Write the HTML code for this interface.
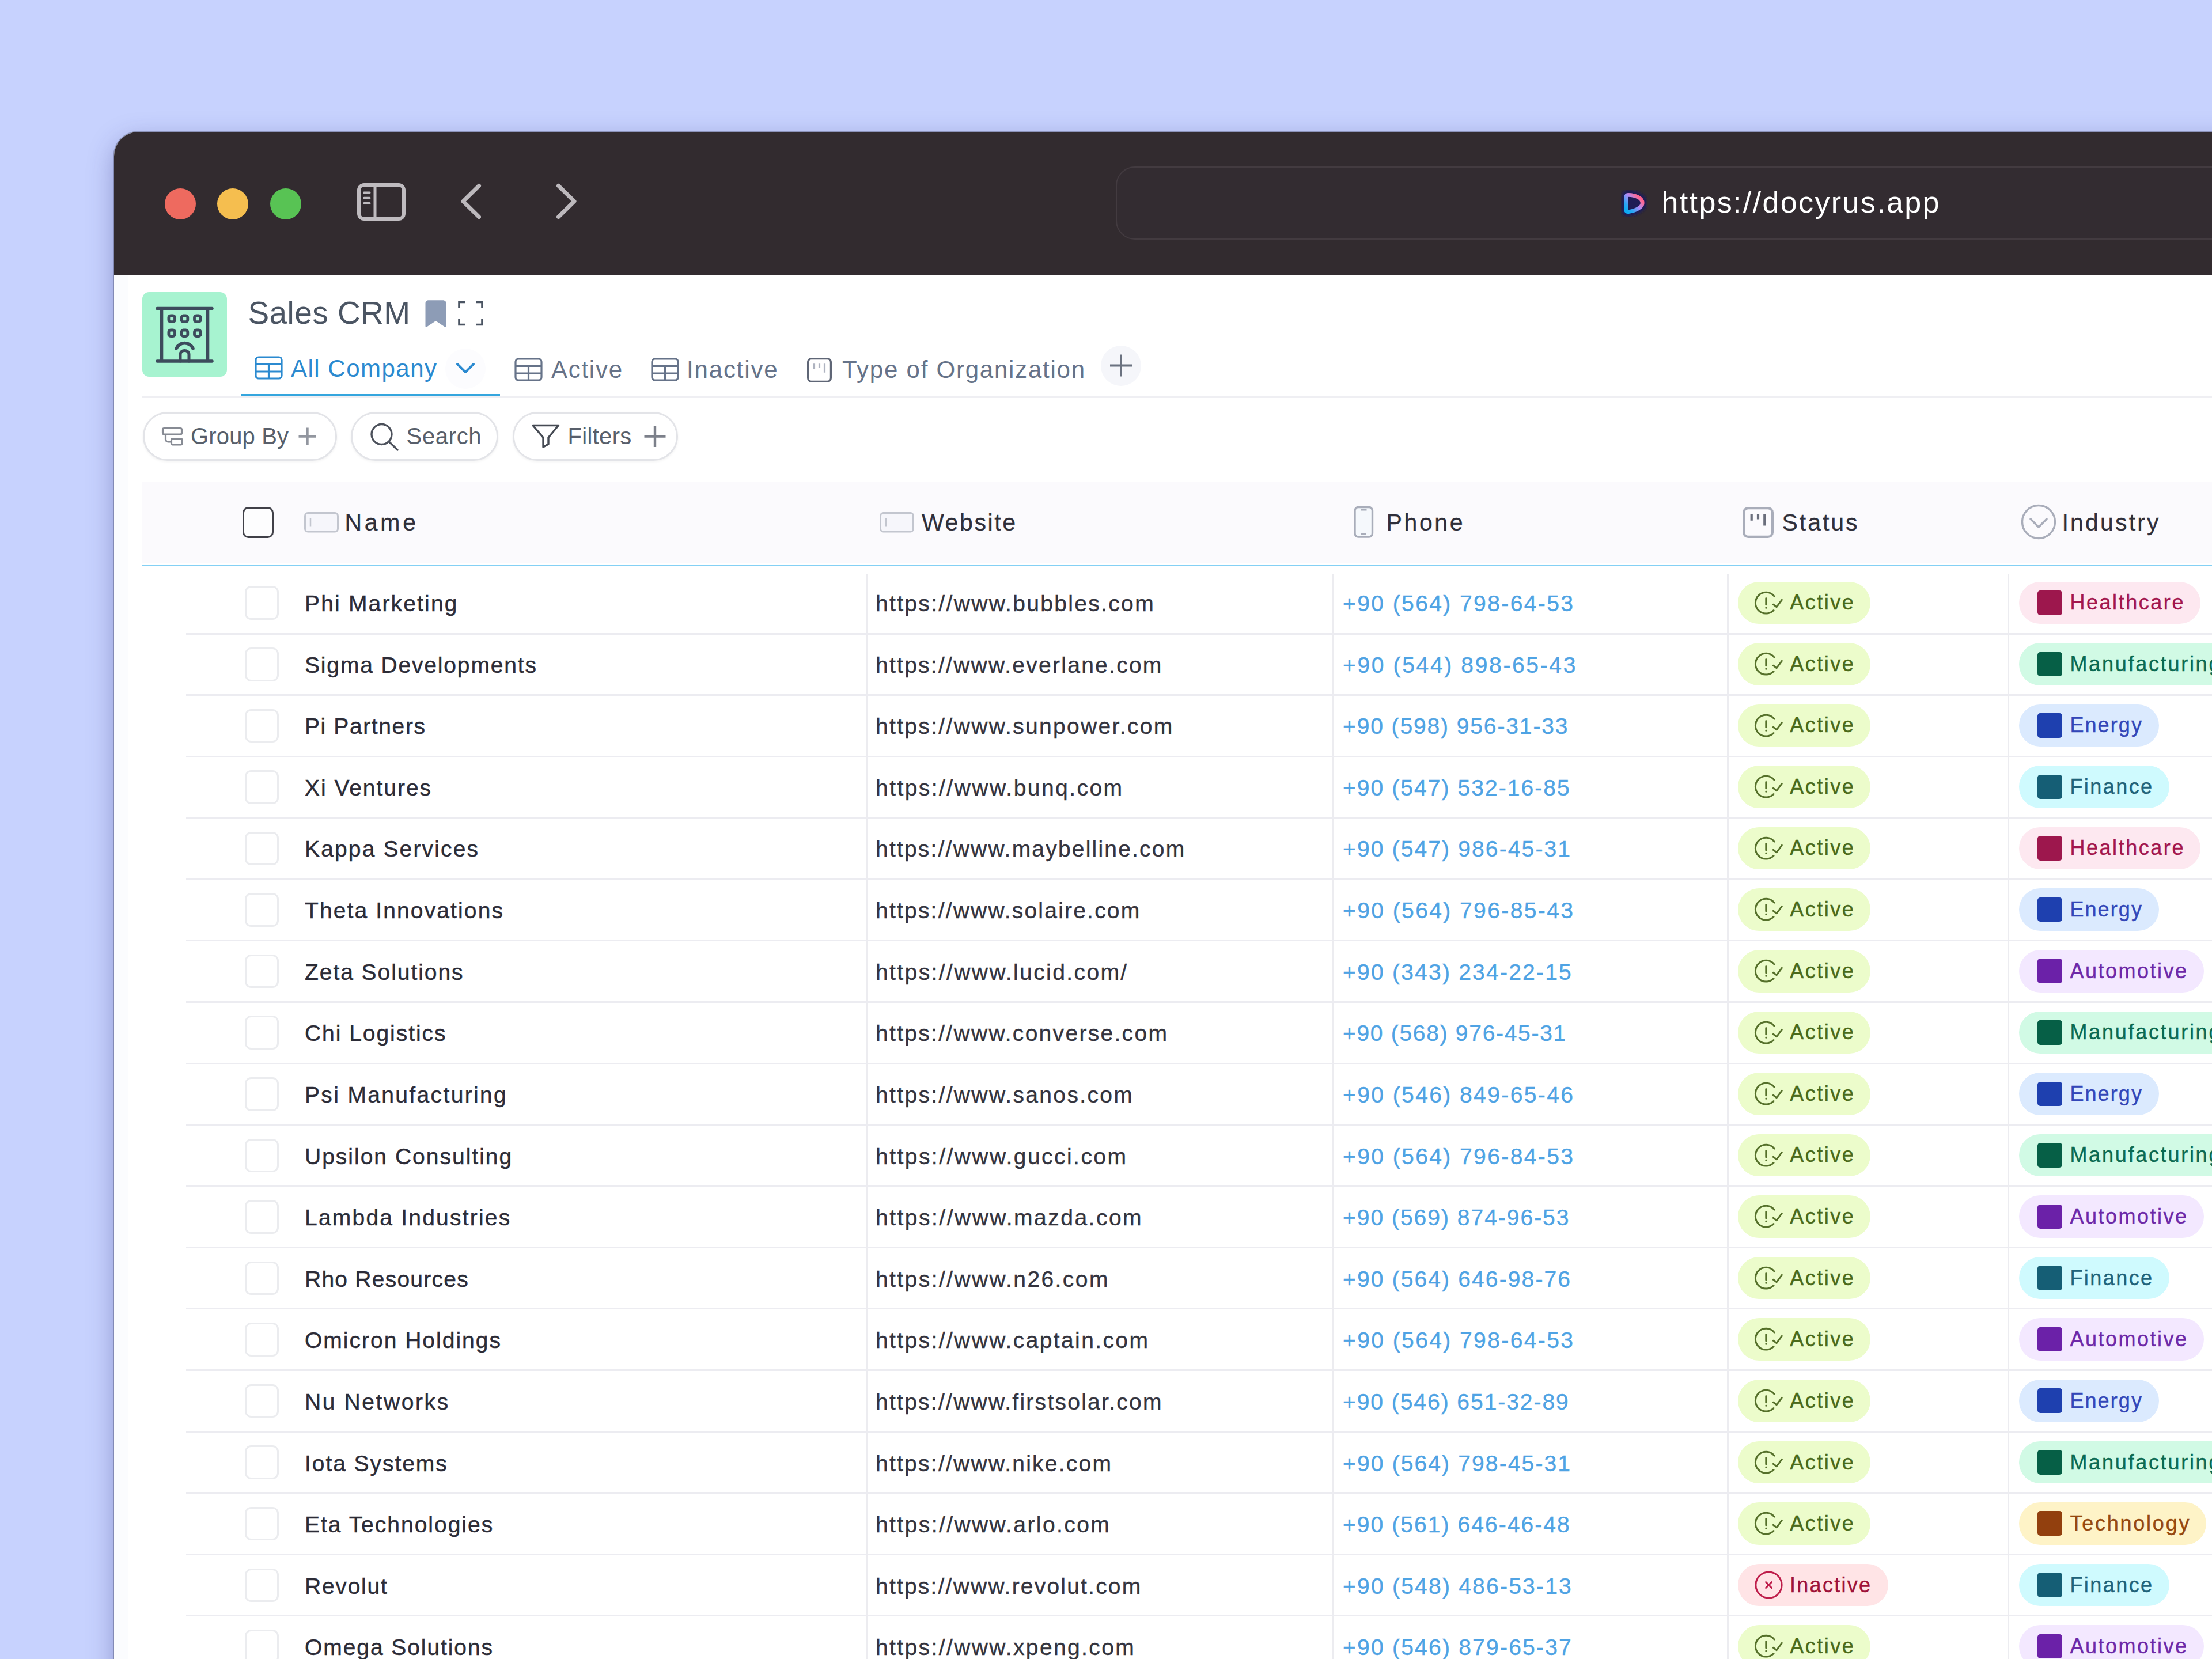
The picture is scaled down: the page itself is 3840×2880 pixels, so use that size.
<!DOCTYPE html>
<html lang="en"><head><meta charset="utf-8"><title>Sales CRM</title>
<style>
html,body{margin:0;padding:0}
body{width:3840px;height:2880px;overflow:hidden;position:relative;background:#c7d2fe;font-family:"Liberation Sans",sans-serif}
.b{position:absolute;box-sizing:border-box;display:block}
.t{position:absolute;white-space:nowrap;display:block}
</style></head><body>
<div class="b" style="left:198px;top:229px;width:3700px;height:2700px;border-radius:42px 0 0 0;background:#fff;box-shadow:0 14px 45px rgba(50,50,130,.36),0 0 0 1.5px rgba(110,115,140,.55);overflow:hidden"><div style="height:248px;background:#322b2f"></div><div style="width:24px;height:2500px;background:#fbfcfe;border-right:1px solid #f7f8fa"></div></div>
<header>
<div class="b" style="left:286.0px;top:326.8px;width:54.0px;height:54.0px;border-radius:50%;background:#ee6a5f"></div>
<div class="b" style="left:377.0px;top:326.8px;width:54.0px;height:54.0px;border-radius:50%;background:#f5be4f"></div>
<div class="b" style="left:468.5px;top:326.8px;width:54.0px;height:54.0px;border-radius:50%;background:#58c354"></div>
<svg class="b" style="left:617.0px;top:315.0px;" width="90.0" height="71.0" viewBox="617 315 90 71" fill="none"><rect x="623" y="321" width="78" height="59" rx="9" stroke="#bfbbbf" stroke-width="6"/><path d="M651 321V380" stroke="#bfbbbf" stroke-width="5"/><path d="M632 334.5H641.5M632 343.7H641.5M632 353H641.5" stroke="#bfbbbf" stroke-width="4" stroke-linecap="round"/></svg>
<svg class="b" style="left:790.0px;top:310.0px;" width="60.0" height="80.0" viewBox="790 310 60 80" fill="none"><path d="M831.5 322.5L804 349.5L831.5 376.5" stroke="#bcb8bc" stroke-width="7" stroke-linecap="round" stroke-linejoin="round"/></svg>
<svg class="b" style="left:950.0px;top:310.0px;" width="60.0" height="80.0" viewBox="950 310 60 80" fill="none"><path d="M969.5 322.5L997 349.5L969.5 376.5" stroke="#bcb8bc" stroke-width="7" stroke-linecap="round" stroke-linejoin="round"/></svg>
<div class="b" style="left:1936.5px;top:288.6px;width:2000.0px;height:127.4px;border-radius:33px;border:2px solid #433b40;background:#332c31"></div>
<svg class="b" style="left:2796.0px;top:312.0px;" width="80.0" height="80.0" viewBox="2796 312 80 80" fill="none"><defs><linearGradient id="lg" x1="2823" y1="366" x2="2850" y2="341" gradientUnits="userSpaceOnUse"><stop offset="0" stop-color="#0cabf3"/><stop offset=".2" stop-color="#2aa6f4"/><stop offset=".55" stop-color="#ab8cf8"/><stop offset=".85" stop-color="#fb6a97"/><stop offset="1" stop-color="#ff5a80"/></linearGradient><filter id="bl" x="-30%" y="-30%" width="160%" height="160%"><feGaussianBlur stdDeviation="2.2"/></filter></defs><path d="M2822.9 342C2822.9 339.5 2824.2 338.2 2826.5 338.3C2839.5 338.6 2851.3 344 2851.2 352.5C2851.2 359.8 2839.5 366 2827 367.6C2824.5 368 2822.9 366.8 2822.9 364.5Z" fill="#1e1a58" stroke="#1e1a58" stroke-width="16" stroke-linejoin="round" filter="url(#bl)"/><path d="M2822.9 342C2822.9 339.5 2824.2 338.2 2826.5 338.3C2839.5 338.6 2851.3 344 2851.2 352.5C2851.2 359.8 2839.5 366 2827 367.6C2824.5 368 2822.9 366.8 2822.9 364.5Z" fill="#1f1c55" stroke="url(#lg)" stroke-width="6.8" stroke-linejoin="round"/></svg>
<span class="t" style="left:2884.5px;top:325.0px;font-size:52px;line-height:52px;color:#ffffff;letter-spacing:2.37px;font-weight:400;">https://docyrus.app</span>
</header>
<section>
<div class="b" style="left:247.0px;top:507.0px;width:147.0px;height:147.0px;border-radius:12px;background:#a7f3d0"></div>
<svg class="b" style="left:265.0px;top:525.0px;" width="112.0" height="112.0" viewBox="265 525 112 112" fill="none"><g stroke="#3d4b5c" stroke-width="5.6" stroke-linecap="round" stroke-linejoin="round"><path d="M273 535.5H368M273 627H368M280.5 535.5V627M360.5 535.5V627"/><rect x="292.9" y="548" width="10.6" height="10.6" rx="3.2" stroke-width="4.8"/><rect x="315.2" y="548" width="10.6" height="10.6" rx="3.2" stroke-width="4.8"/><rect x="337.5" y="548" width="10.6" height="10.6" rx="3.2" stroke-width="4.8"/><rect x="292.9" y="573" width="10.6" height="10.6" rx="3.2" stroke-width="4.8"/><rect x="315.2" y="573" width="10.6" height="10.6" rx="3.2" stroke-width="4.8"/><rect x="337.5" y="573" width="10.6" height="10.6" rx="3.2" stroke-width="4.8"/><path d="M306 605C312 592.5 329 592.5 335 605"/><path d="M313 627V615.5C313 606 328 606 328 615.5V627" stroke-width="5"/></g></svg>
<span class="t" style="left:430.5px;top:515.9px;font-size:55px;line-height:55px;color:#4b5563;letter-spacing:0.42px;font-weight:400;">Sales CRM</span>
<svg class="b" style="left:735.0px;top:519.0px;" width="44.0" height="52.0" viewBox="735 519 44 52" fill="none"><path d="M738.5 527C738.5 523.5 740.5 521.3 744 521.3H769C772.5 521.3 774.5 523.5 774.5 527V566C774.5 567.6 773 568.2 771.8 567.3L756.5 557L741.2 567.3C740 568.2 738.5 567.6 738.5 566Z" fill="#8d9cb6"/></svg>
<svg class="b" style="left:792.0px;top:519.0px;" width="50.0" height="50.0" viewBox="792 519 50 50" fill="none"><path d="M797 535V524.5H808M826 524.5H837V535M837 553V563.5H826M808 563.5H797V553" stroke="#4b5563" stroke-width="3.6"/></svg>
<svg class="b" style="left:441.0px;top:617.0px;" width="51.0" height="43.0" viewBox="441 617 51 43" fill="none"><g stroke="#2b8ad0" stroke-width="3.2"><rect x="444" y="620" width="45" height="37" rx="5"/><path d="M444 632.5H489M444 645H489M466.5 632.5V657"/></g></svg>
<span class="t" style="left:505.0px;top:619.4px;font-size:42px;line-height:42px;color:#2b8ad0;letter-spacing:1.49px;font-weight:400;">All Company</span>
<div class="b" style="left:773.0px;top:605.0px;width:70.0px;height:70.0px;border-radius:50%;background:#fcfcfe"></div>
<svg class="b" style="left:785.0px;top:622.0px;" width="46.0" height="36.0" viewBox="785 622 46 36" fill="none"><path d="M794 632L808 646L822 632" stroke="#2b8ad0" stroke-width="4" stroke-linecap="round" stroke-linejoin="round"/></svg>
<div class="b" style="left:247.0px;top:688.0px;width:3600.0px;height:3.0px;background:#efeff3"></div>
<div class="b" style="left:418.0px;top:683.6px;width:450.0px;height:3.1px;background:#35a6de"></div>
<svg class="b" style="left:892.0px;top:620.0px;" width="51.0" height="43.0" viewBox="892 620 51 43" fill="none"><g stroke="#667389" stroke-width="3.2"><rect x="895" y="623" width="45" height="37" rx="5"/><path d="M895 635.5H940M895 648H940M917.5 635.5V660"/></g></svg>
<span class="t" style="left:957.0px;top:621.4px;font-size:42px;line-height:42px;color:#667389;letter-spacing:1.73px;font-weight:400;">Active</span>
<svg class="b" style="left:1129.0px;top:620.0px;" width="51.0" height="43.0" viewBox="1129 620 51 43" fill="none"><g stroke="#667389" stroke-width="3.2"><rect x="1132" y="623" width="45" height="37" rx="5"/><path d="M1132 635.5H1177M1132 648H1177M1154.5 635.5V660"/></g></svg>
<span class="t" style="left:1192.0px;top:621.4px;font-size:42px;line-height:42px;color:#667389;letter-spacing:1.84px;font-weight:400;">Inactive</span>
<svg class="b" style="left:1400.0px;top:620.0px;" width="45.0" height="45.0" viewBox="1400 620 45 45" fill="none"><rect x="1402.6" y="622.6" width="39.8" height="39.8" rx="6.0" stroke="#5f6676" stroke-width="3.2"/><path d="M1413.5 631.3V639.9M1422.5 631.3V638.2M1431.5 631.3V646.8" stroke="#aeb3c0" stroke-width="3.2"/></svg>
<span class="t" style="left:1462.0px;top:621.4px;font-size:42px;line-height:42px;color:#667389;letter-spacing:1.76px;font-weight:400;">Type of Organization</span>
<div class="b" style="left:1911.0px;top:599.5px;width:70.0px;height:70.0px;border-radius:50%;background:#f5f6fa"></div>
<svg class="b" style="left:1920.0px;top:610.0px;" width="52.0" height="52.0" viewBox="1920 610 52 52" fill="none"><path d="M1927 634.5H1965M1946 615.5V653.5" stroke="#6b7280" stroke-width="4"/></svg>
</section>
<nav>
<div class="b" style="left:247.5px;top:715.0px;width:337.5px;height:85.0px;border-radius:43px;border:3px solid #e3e4e8;background:#fff;box-shadow:0 2px 4px rgba(0,0,0,.05)"></div>
<div class="b" style="left:609.0px;top:715.0px;width:256.0px;height:85.0px;border-radius:43px;border:3px solid #e3e4e8;background:#fff;box-shadow:0 2px 4px rgba(0,0,0,.05)"></div>
<div class="b" style="left:889.5px;top:715.0px;width:287.0px;height:85.0px;border-radius:43px;border:3px solid #e3e4e8;background:#fff;box-shadow:0 2px 4px rgba(0,0,0,.05)"></div>
<svg class="b" style="left:276.0px;top:736.0px;" width="46.0" height="42.0" viewBox="276 736 46 42" fill="none"><g stroke="#878b94" stroke-width="3.2" stroke-linejoin="round"><rect x="282.5" y="743.5" width="33" height="10.5" rx="2.5"/><rect x="297.5" y="761.5" width="18.5" height="10.5" rx="2.5"/><path d="M287.5 754V762.5C287.5 765 289.5 767 292 767H297.5"/></g></svg>
<span class="t" style="left:331.0px;top:736.9px;font-size:40px;line-height:40px;color:#585f6b;letter-spacing:0.15px;font-weight:400;">Group By</span>
<svg class="b" style="left:515.0px;top:741.0px;" width="36.0" height="36.0" viewBox="515 741 36 36" fill="none"><path d="M518.5 757.5H548.5M533.5 742.5V772.5" stroke="#92969f" stroke-width="4.4"/></svg>
<svg class="b" style="left:638.0px;top:730.0px;" width="58.0" height="56.0" viewBox="638 730 58 56" fill="none"><circle cx="662.5" cy="754" r="17.5" stroke="#4c515b" stroke-width="3.4"/><path d="M675.5 767L690 781" stroke="#4c515b" stroke-width="3.4" stroke-linecap="round"/></svg>
<span class="t" style="left:705.6px;top:736.9px;font-size:40px;line-height:40px;color:#585f6b;letter-spacing:0.65px;font-weight:400;">Search</span>
<svg class="b" style="left:918.0px;top:732.0px;" width="58.0" height="50.0" viewBox="918 732 58 50" fill="none"><path d="M925 738.5H969.5L952 759.5V771L943 776V759.5Z" stroke="#454a53" stroke-width="3.4" stroke-linejoin="round"/></svg>
<span class="t" style="left:985.6px;top:736.9px;font-size:40px;line-height:40px;color:#585f6b;letter-spacing:0.30px;font-weight:400;">Filters</span>
<svg class="b" style="left:1114.0px;top:734.0px;" width="46.0" height="46.0" viewBox="1114 734 46 46" fill="none"><path d="M1118.5 757.5H1155.5M1137 739V776" stroke="#7c808a" stroke-width="4.4"/></svg>
</nav>
<main role="table">
<div role="row">
<div class="b" style="left:247.0px;top:836.0px;width:3600.0px;height:142.0px;background:#fbfafd"></div>
<div class="b" style="left:247.0px;top:979.8px;width:3600.0px;height:3.0px;background:#84d0f5"></div>
<div class="b" style="left:421.0px;top:879.5px;width:54.0px;height:54.0px;border-radius:10px;border:3.7px solid #404048;background:#fdfdfe"></div>
<svg class="b" style="left:527.0px;top:887.6px;" width="62.0" height="38.0" viewBox="527 887.6 62 38" fill="none"><rect x="529.5" y="890.1" width="57" height="32.5" rx="5" stroke="#c3c6cf" stroke-width="3" fill="#f6f6fb"/><path d="M539 899.6V913.1" stroke="#c3c6cf" stroke-width="2.5"/></svg>
<span class="t" style="left:598.5px;top:887.3px;font-size:41px;line-height:41px;color:#2f2f3a;letter-spacing:4.71px;font-weight:400;-webkit-text-stroke:.3px #2f2f3a;">Name</span>
<svg class="b" style="left:1526.0px;top:887.6px;" width="62.0" height="38.0" viewBox="1526 887.6 62 38" fill="none"><rect x="1528.5" y="890.1" width="57" height="32.5" rx="5" stroke="#c3c6cf" stroke-width="3" fill="#f6f6fb"/><path d="M1538 899.6V913.1" stroke="#c3c6cf" stroke-width="2.5"/></svg>
<span class="t" style="left:1600.0px;top:887.3px;font-size:41px;line-height:41px;color:#2f2f3a;letter-spacing:2.61px;font-weight:400;-webkit-text-stroke:.3px #2f2f3a;">Website</span>
<svg class="b" style="left:2348.0px;top:876.0px;" width="40.0" height="60.0" viewBox="2348 876 40 60" fill="none"><rect x="2352" y="880.5" width="30.5" height="51.5" rx="6" stroke="#a9adba" stroke-width="3.4" fill="#f5f8fc"/><path d="M2362 885H2372.5M2362.5 926.5H2372" stroke="#a9adba" stroke-width="3"/></svg>
<span class="t" style="left:2406.5px;top:887.3px;font-size:41px;line-height:41px;color:#2f2f3a;letter-spacing:3.62px;font-weight:400;-webkit-text-stroke:.3px #2f2f3a;">Phone</span>
<svg class="b" style="left:3024.0px;top:878.5px;" width="56.0" height="56.0" viewBox="3024 878.5 56 56" fill="none"><rect x="3027.1" y="881.6" width="49.8" height="49.8" rx="7.6" stroke="#a9adba" stroke-width="4.2"/><path d="M3040.7 892.5V903.3M3052.0 892.5V901.1M3063.3 892.5V911.9" stroke="#6a6e7c" stroke-width="4.2"/></svg>
<span class="t" style="left:3093.5px;top:887.3px;font-size:41px;line-height:41px;color:#2f2f3a;letter-spacing:2.96px;font-weight:400;-webkit-text-stroke:.3px #2f2f3a;">Status</span>
<svg class="b" style="left:3506.0px;top:873.0px;" width="66.0" height="66.0" viewBox="3506 873 66 66" fill="none"><circle cx="3539" cy="906" r="28.5" stroke="#a9adba" stroke-width="3.4"/><path d="M3525 901L3539 915L3553 901" stroke="#a9adba" stroke-width="3.6" stroke-linecap="round" stroke-linejoin="round"/></svg>
<span class="t" style="left:3579.5px;top:887.3px;font-size:41px;line-height:41px;color:#2f2f3a;letter-spacing:3.17px;font-weight:400;-webkit-text-stroke:.3px #2f2f3a;">Industry</span>
</div>
<div class="b" style="left:1502.5px;top:995.5px;width:3.0px;height:1900.0px;background:#ececf0"></div>
<div class="b" style="left:2312.5px;top:995.5px;width:3.0px;height:1900.0px;background:#ececf0"></div>
<div class="b" style="left:2997.5px;top:995.5px;width:3.0px;height:1900.0px;background:#ececf0"></div>
<div class="b" style="left:3485.0px;top:995.5px;width:3.0px;height:1900.0px;background:#ececf0"></div>
<div role="row">
<div class="b" style="left:322.5px;top:1098.9px;width:3600.0px;height:2.8px;background:#ececf1"></div>
<div class="b" style="left:425.0px;top:1017.4px;width:58.5px;height:58.5px;border-radius:11px;border:3.8px solid #ebecef;background:#fff"></div>
<span class="t" style="left:529.0px;top:1028.0px;font-size:39px;line-height:39px;color:#2c2c37;letter-spacing:2.17px;font-weight:400;-webkit-text-stroke:.45px #2c2c37;">Phi Marketing</span>
<span class="t" style="left:1520.0px;top:1028.0px;font-size:39px;line-height:39px;color:#34343e;letter-spacing:2.33px;font-weight:400;-webkit-text-stroke:.4px #34343e;">https://www.bubbles.com</span>
<span class="t" style="left:2331.0px;top:1028.0px;font-size:39px;line-height:39px;color:#4fa3e4;letter-spacing:2.41px;font-weight:400;-webkit-text-stroke:.4px #4fa3e4;">+90 (564) 798-64-53</span>
<div class="b" style="left:3016.7px;top:1009.6px;width:230.0px;height:73.5px;border-radius:37px;background:#ecfccb"></div>
<svg class="b" style="left:3040.0px;top:1016.6px;" width="60.0" height="60.0" viewBox="3040 1016.6 60 60" fill="none"><g stroke="#55702a" stroke-width="3" stroke-linecap="round" stroke-linejoin="round"><path d="M3080.1 1034.7A18.4 18.4 0 1 0 3079.0 1059.1"/><path d="M3078.3 1048.9L3084.2 1053.3L3093.3 1040.9"/><path d="M3065.8 1038.1V1049.3M3065.8 1054.7V1054.9"/></g></svg>
<span class="t" style="left:3107.3px;top:1027.9px;font-size:36px;line-height:36px;color:#4a6a1a;letter-spacing:2.49px;font-weight:400;-webkit-text-stroke:.4px #4a6a1a;">Active</span>
<div class="b" style="left:3504.5px;top:1009.6px;width:315.9px;height:73.5px;border-radius:37px;background:#fde8f0"></div>
<div class="b" style="left:3537.0px;top:1024.9px;width:42.6px;height:42.8px;border-radius:5px;background:#9d174d"></div>
<span class="t" style="left:3593.4px;top:1027.9px;font-size:36px;line-height:36px;color:#a3154d;letter-spacing:2.55px;font-weight:400;-webkit-text-stroke:.4px #a3154d;">Healthcare</span>
</div>
<div role="row">
<div class="b" style="left:322.5px;top:1205.4px;width:3600.0px;height:2.8px;background:#ececf1"></div>
<div class="b" style="left:425.0px;top:1124.0px;width:58.5px;height:58.5px;border-radius:11px;border:3.8px solid #ebecef;background:#fff"></div>
<span class="t" style="left:529.0px;top:1134.6px;font-size:39px;line-height:39px;color:#2c2c37;letter-spacing:1.84px;font-weight:400;-webkit-text-stroke:.45px #2c2c37;">Sigma Developments</span>
<span class="t" style="left:1520.0px;top:1134.6px;font-size:39px;line-height:39px;color:#34343e;letter-spacing:2.26px;font-weight:400;-webkit-text-stroke:.4px #34343e;">https://www.everlane.com</span>
<span class="t" style="left:2331.0px;top:1134.6px;font-size:39px;line-height:39px;color:#4fa3e4;letter-spacing:2.65px;font-weight:400;-webkit-text-stroke:.4px #4fa3e4;">+90 (544) 898-65-43</span>
<div class="b" style="left:3016.7px;top:1116.2px;width:230.0px;height:73.5px;border-radius:37px;background:#ecfccb"></div>
<svg class="b" style="left:3040.0px;top:1123.2px;" width="60.0" height="60.0" viewBox="3040 1123.2 60 60" fill="none"><g stroke="#55702a" stroke-width="3" stroke-linecap="round" stroke-linejoin="round"><path d="M3080.1 1141.3A18.4 18.4 0 1 0 3079.0 1165.7"/><path d="M3078.3 1155.5L3084.2 1159.9L3093.3 1147.5"/><path d="M3065.8 1144.7V1155.9M3065.8 1161.3V1161.5"/></g></svg>
<span class="t" style="left:3107.3px;top:1134.5px;font-size:36px;line-height:36px;color:#4a6a1a;letter-spacing:2.49px;font-weight:400;-webkit-text-stroke:.4px #4a6a1a;">Active</span>
<div class="b" style="left:3504.5px;top:1116.2px;width:379.9px;height:73.5px;border-radius:37px;background:#d1fae5"></div>
<div class="b" style="left:3537.0px;top:1131.5px;width:42.6px;height:42.8px;border-radius:5px;background:#065f46"></div>
<span class="t" style="left:3593.4px;top:1134.5px;font-size:36px;line-height:36px;color:#0a6a52;letter-spacing:2.74px;font-weight:400;-webkit-text-stroke:.4px #0a6a52;">Manufacturing</span>
</div>
<div role="row">
<div class="b" style="left:322.5px;top:1312.0px;width:3600.0px;height:2.8px;background:#ececf1"></div>
<div class="b" style="left:425.0px;top:1230.5px;width:58.5px;height:58.5px;border-radius:11px;border:3.8px solid #ebecef;background:#fff"></div>
<span class="t" style="left:529.0px;top:1241.2px;font-size:39px;line-height:39px;color:#2c2c37;letter-spacing:1.61px;font-weight:400;-webkit-text-stroke:.45px #2c2c37;">Pi Partners</span>
<span class="t" style="left:1520.0px;top:1241.2px;font-size:39px;line-height:39px;color:#34343e;letter-spacing:2.33px;font-weight:400;-webkit-text-stroke:.4px #34343e;">https://www.sunpower.com</span>
<span class="t" style="left:2331.0px;top:1241.2px;font-size:39px;line-height:39px;color:#4fa3e4;letter-spacing:1.88px;font-weight:400;-webkit-text-stroke:.4px #4fa3e4;">+90 (598) 956-31-33</span>
<div class="b" style="left:3016.7px;top:1222.7px;width:230.0px;height:73.5px;border-radius:37px;background:#ecfccb"></div>
<svg class="b" style="left:3040.0px;top:1229.7px;" width="60.0" height="60.0" viewBox="3040 1229.7 60 60" fill="none"><g stroke="#55702a" stroke-width="3" stroke-linecap="round" stroke-linejoin="round"><path d="M3080.1 1247.8A18.4 18.4 0 1 0 3079.0 1272.2"/><path d="M3078.3 1262.0L3084.2 1266.4L3093.3 1254.0"/><path d="M3065.8 1251.2V1262.4M3065.8 1267.8V1268.0"/></g></svg>
<span class="t" style="left:3107.3px;top:1241.1px;font-size:36px;line-height:36px;color:#4a6a1a;letter-spacing:2.49px;font-weight:400;-webkit-text-stroke:.4px #4a6a1a;">Active</span>
<div class="b" style="left:3504.5px;top:1222.7px;width:243.4px;height:73.5px;border-radius:37px;background:#dbeafe"></div>
<div class="b" style="left:3537.0px;top:1238.0px;width:42.6px;height:42.8px;border-radius:5px;background:#1e40af"></div>
<span class="t" style="left:3593.4px;top:1241.1px;font-size:36px;line-height:36px;color:#3346b8;letter-spacing:2.09px;font-weight:400;-webkit-text-stroke:.4px #3346b8;">Energy</span>
</div>
<div role="row">
<div class="b" style="left:322.5px;top:1418.5px;width:3600.0px;height:2.8px;background:#ececf1"></div>
<div class="b" style="left:425.0px;top:1337.1px;width:58.5px;height:58.5px;border-radius:11px;border:3.8px solid #ebecef;background:#fff"></div>
<span class="t" style="left:529.0px;top:1347.8px;font-size:39px;line-height:39px;color:#2c2c37;letter-spacing:1.96px;font-weight:400;-webkit-text-stroke:.45px #2c2c37;">Xi Ventures</span>
<span class="t" style="left:1520.0px;top:1347.8px;font-size:39px;line-height:39px;color:#34343e;letter-spacing:2.45px;font-weight:400;-webkit-text-stroke:.4px #34343e;">https://www.bunq.com</span>
<span class="t" style="left:2331.0px;top:1347.8px;font-size:39px;line-height:39px;color:#4fa3e4;letter-spacing:2.06px;font-weight:400;-webkit-text-stroke:.4px #4fa3e4;">+90 (547) 532-16-85</span>
<div class="b" style="left:3016.7px;top:1329.3px;width:230.0px;height:73.5px;border-radius:37px;background:#ecfccb"></div>
<svg class="b" style="left:3040.0px;top:1336.3px;" width="60.0" height="60.0" viewBox="3040 1336.3 60 60" fill="none"><g stroke="#55702a" stroke-width="3" stroke-linecap="round" stroke-linejoin="round"><path d="M3080.1 1354.4A18.4 18.4 0 1 0 3079.0 1378.8"/><path d="M3078.3 1368.6L3084.2 1373.0L3093.3 1360.6"/><path d="M3065.8 1357.8V1369.0M3065.8 1374.4V1374.6"/></g></svg>
<span class="t" style="left:3107.3px;top:1347.8px;font-size:36px;line-height:36px;color:#4a6a1a;letter-spacing:2.49px;font-weight:400;-webkit-text-stroke:.4px #4a6a1a;">Active</span>
<div class="b" style="left:3504.5px;top:1329.3px;width:261.6px;height:73.5px;border-radius:37px;background:#cffafe"></div>
<div class="b" style="left:3537.0px;top:1344.6px;width:42.6px;height:42.8px;border-radius:5px;background:#155e75"></div>
<span class="t" style="left:3593.4px;top:1347.8px;font-size:36px;line-height:36px;color:#1f637a;letter-spacing:2.44px;font-weight:400;-webkit-text-stroke:.4px #1f637a;">Finance</span>
</div>
<div role="row">
<div class="b" style="left:322.5px;top:1525.0px;width:3600.0px;height:2.8px;background:#ececf1"></div>
<div class="b" style="left:425.0px;top:1443.7px;width:58.5px;height:58.5px;border-radius:11px;border:3.8px solid #ebecef;background:#fff"></div>
<span class="t" style="left:529.0px;top:1454.4px;font-size:39px;line-height:39px;color:#2c2c37;letter-spacing:2.14px;font-weight:400;-webkit-text-stroke:.45px #2c2c37;">Kappa Services</span>
<span class="t" style="left:1520.0px;top:1454.4px;font-size:39px;line-height:39px;color:#34343e;letter-spacing:2.20px;font-weight:400;-webkit-text-stroke:.4px #34343e;">https://www.maybelline.com</span>
<span class="t" style="left:2331.0px;top:1454.4px;font-size:39px;line-height:39px;color:#4fa3e4;letter-spacing:2.13px;font-weight:400;-webkit-text-stroke:.4px #4fa3e4;">+90 (547) 986-45-31</span>
<div class="b" style="left:3016.7px;top:1435.9px;width:230.0px;height:73.5px;border-radius:37px;background:#ecfccb"></div>
<svg class="b" style="left:3040.0px;top:1442.9px;" width="60.0" height="60.0" viewBox="3040 1442.9 60 60" fill="none"><g stroke="#55702a" stroke-width="3" stroke-linecap="round" stroke-linejoin="round"><path d="M3080.1 1461.0A18.4 18.4 0 1 0 3079.0 1485.4"/><path d="M3078.3 1475.2L3084.2 1479.6L3093.3 1467.2"/><path d="M3065.8 1464.4V1475.6M3065.8 1481.0V1481.2"/></g></svg>
<span class="t" style="left:3107.3px;top:1454.4px;font-size:36px;line-height:36px;color:#4a6a1a;letter-spacing:2.49px;font-weight:400;-webkit-text-stroke:.4px #4a6a1a;">Active</span>
<div class="b" style="left:3504.5px;top:1435.9px;width:315.9px;height:73.5px;border-radius:37px;background:#fde8f0"></div>
<div class="b" style="left:3537.0px;top:1451.2px;width:42.6px;height:42.8px;border-radius:5px;background:#9d174d"></div>
<span class="t" style="left:3593.4px;top:1454.4px;font-size:36px;line-height:36px;color:#a3154d;letter-spacing:2.55px;font-weight:400;-webkit-text-stroke:.4px #a3154d;">Healthcare</span>
</div>
<div role="row">
<div class="b" style="left:322.5px;top:1631.6px;width:3600.0px;height:2.8px;background:#ececf1"></div>
<div class="b" style="left:425.0px;top:1550.2px;width:58.5px;height:58.5px;border-radius:11px;border:3.8px solid #ebecef;background:#fff"></div>
<span class="t" style="left:529.0px;top:1561.0px;font-size:39px;line-height:39px;color:#2c2c37;letter-spacing:2.12px;font-weight:400;-webkit-text-stroke:.45px #2c2c37;">Theta Innovations</span>
<span class="t" style="left:1520.0px;top:1561.0px;font-size:39px;line-height:39px;color:#34343e;letter-spacing:2.21px;font-weight:400;-webkit-text-stroke:.4px #34343e;">https://www.solaire.com</span>
<span class="t" style="left:2331.0px;top:1561.0px;font-size:39px;line-height:39px;color:#4fa3e4;letter-spacing:2.41px;font-weight:400;-webkit-text-stroke:.4px #4fa3e4;">+90 (564) 796-85-43</span>
<div class="b" style="left:3016.7px;top:1542.4px;width:230.0px;height:73.5px;border-radius:37px;background:#ecfccb"></div>
<svg class="b" style="left:3040.0px;top:1549.4px;" width="60.0" height="60.0" viewBox="3040 1549.4 60 60" fill="none"><g stroke="#55702a" stroke-width="3" stroke-linecap="round" stroke-linejoin="round"><path d="M3080.1 1567.5A18.4 18.4 0 1 0 3079.0 1591.9"/><path d="M3078.3 1581.7L3084.2 1586.1L3093.3 1573.7"/><path d="M3065.8 1570.9V1582.1M3065.8 1587.5V1587.7"/></g></svg>
<span class="t" style="left:3107.3px;top:1561.0px;font-size:36px;line-height:36px;color:#4a6a1a;letter-spacing:2.49px;font-weight:400;-webkit-text-stroke:.4px #4a6a1a;">Active</span>
<div class="b" style="left:3504.5px;top:1542.4px;width:243.4px;height:73.5px;border-radius:37px;background:#dbeafe"></div>
<div class="b" style="left:3537.0px;top:1557.7px;width:42.6px;height:42.8px;border-radius:5px;background:#1e40af"></div>
<span class="t" style="left:3593.4px;top:1561.0px;font-size:36px;line-height:36px;color:#3346b8;letter-spacing:2.09px;font-weight:400;-webkit-text-stroke:.4px #3346b8;">Energy</span>
</div>
<div role="row">
<div class="b" style="left:322.5px;top:1738.1px;width:3600.0px;height:2.8px;background:#ececf1"></div>
<div class="b" style="left:425.0px;top:1656.8px;width:58.5px;height:58.5px;border-radius:11px;border:3.8px solid #ebecef;background:#fff"></div>
<span class="t" style="left:529.0px;top:1667.6px;font-size:39px;line-height:39px;color:#2c2c37;letter-spacing:1.94px;font-weight:400;-webkit-text-stroke:.45px #2c2c37;">Zeta Solutions</span>
<span class="t" style="left:1520.0px;top:1667.6px;font-size:39px;line-height:39px;color:#34343e;letter-spacing:2.40px;font-weight:400;-webkit-text-stroke:.4px #34343e;">https://www.lucid.com/</span>
<span class="t" style="left:2331.0px;top:1667.6px;font-size:39px;line-height:39px;color:#4fa3e4;letter-spacing:2.23px;font-weight:400;-webkit-text-stroke:.4px #4fa3e4;">+90 (343) 234-22-15</span>
<div class="b" style="left:3016.7px;top:1649.0px;width:230.0px;height:73.5px;border-radius:37px;background:#ecfccb"></div>
<svg class="b" style="left:3040.0px;top:1656.0px;" width="60.0" height="60.0" viewBox="3040 1656.0 60 60" fill="none"><g stroke="#55702a" stroke-width="3" stroke-linecap="round" stroke-linejoin="round"><path d="M3080.1 1674.1A18.4 18.4 0 1 0 3079.0 1698.5"/><path d="M3078.3 1688.3L3084.2 1692.7L3093.3 1680.3"/><path d="M3065.8 1677.5V1688.7M3065.8 1694.1V1694.3"/></g></svg>
<span class="t" style="left:3107.3px;top:1667.6px;font-size:36px;line-height:36px;color:#4a6a1a;letter-spacing:2.49px;font-weight:400;-webkit-text-stroke:.4px #4a6a1a;">Active</span>
<div class="b" style="left:3504.5px;top:1649.0px;width:321.5px;height:73.5px;border-radius:37px;background:#f3e8ff"></div>
<div class="b" style="left:3537.0px;top:1664.3px;width:42.6px;height:42.8px;border-radius:5px;background:#6b21a8"></div>
<span class="t" style="left:3593.4px;top:1667.6px;font-size:36px;line-height:36px;color:#6d28a8;letter-spacing:2.50px;font-weight:400;-webkit-text-stroke:.4px #6d28a8;">Automotive</span>
</div>
<div role="row">
<div class="b" style="left:322.5px;top:1844.6px;width:3600.0px;height:2.8px;background:#ececf1"></div>
<div class="b" style="left:425.0px;top:1763.4px;width:58.5px;height:58.5px;border-radius:11px;border:3.8px solid #ebecef;background:#fff"></div>
<span class="t" style="left:529.0px;top:1774.3px;font-size:39px;line-height:39px;color:#2c2c37;letter-spacing:1.95px;font-weight:400;-webkit-text-stroke:.45px #2c2c37;">Chi Logistics</span>
<span class="t" style="left:1520.0px;top:1774.3px;font-size:39px;line-height:39px;color:#34343e;letter-spacing:2.30px;font-weight:400;-webkit-text-stroke:.4px #34343e;">https://www.converse.com</span>
<span class="t" style="left:2331.0px;top:1774.3px;font-size:39px;line-height:39px;color:#4fa3e4;letter-spacing:1.70px;font-weight:400;-webkit-text-stroke:.4px #4fa3e4;">+90 (568) 976-45-31</span>
<div class="b" style="left:3016.7px;top:1755.6px;width:230.0px;height:73.5px;border-radius:37px;background:#ecfccb"></div>
<svg class="b" style="left:3040.0px;top:1762.6px;" width="60.0" height="60.0" viewBox="3040 1762.6 60 60" fill="none"><g stroke="#55702a" stroke-width="3" stroke-linecap="round" stroke-linejoin="round"><path d="M3080.1 1780.7A18.4 18.4 0 1 0 3079.0 1805.1"/><path d="M3078.3 1794.9L3084.2 1799.3L3093.3 1786.9"/><path d="M3065.8 1784.1V1795.3M3065.8 1800.7V1800.9"/></g></svg>
<span class="t" style="left:3107.3px;top:1774.2px;font-size:36px;line-height:36px;color:#4a6a1a;letter-spacing:2.49px;font-weight:400;-webkit-text-stroke:.4px #4a6a1a;">Active</span>
<div class="b" style="left:3504.5px;top:1755.6px;width:379.9px;height:73.5px;border-radius:37px;background:#d1fae5"></div>
<div class="b" style="left:3537.0px;top:1770.9px;width:42.6px;height:42.8px;border-radius:5px;background:#065f46"></div>
<span class="t" style="left:3593.4px;top:1774.2px;font-size:36px;line-height:36px;color:#0a6a52;letter-spacing:2.74px;font-weight:400;-webkit-text-stroke:.4px #0a6a52;">Manufacturing</span>
</div>
<div role="row">
<div class="b" style="left:322.5px;top:1951.1px;width:3600.0px;height:2.8px;background:#ececf1"></div>
<div class="b" style="left:425.0px;top:1870.0px;width:58.5px;height:58.5px;border-radius:11px;border:3.8px solid #ebecef;background:#fff"></div>
<span class="t" style="left:529.0px;top:1880.9px;font-size:39px;line-height:39px;color:#2c2c37;letter-spacing:2.35px;font-weight:400;-webkit-text-stroke:.45px #2c2c37;">Psi Manufacturing</span>
<span class="t" style="left:1520.0px;top:1880.9px;font-size:39px;line-height:39px;color:#34343e;letter-spacing:2.35px;font-weight:400;-webkit-text-stroke:.4px #34343e;">https://www.sanos.com</span>
<span class="t" style="left:2331.0px;top:1880.9px;font-size:39px;line-height:39px;color:#4fa3e4;letter-spacing:2.41px;font-weight:400;-webkit-text-stroke:.4px #4fa3e4;">+90 (546) 849-65-46</span>
<div class="b" style="left:3016.7px;top:1862.2px;width:230.0px;height:73.5px;border-radius:37px;background:#ecfccb"></div>
<svg class="b" style="left:3040.0px;top:1869.2px;" width="60.0" height="60.0" viewBox="3040 1869.2 60 60" fill="none"><g stroke="#55702a" stroke-width="3" stroke-linecap="round" stroke-linejoin="round"><path d="M3080.1 1887.3A18.4 18.4 0 1 0 3079.0 1911.7"/><path d="M3078.3 1901.5L3084.2 1905.9L3093.3 1893.5"/><path d="M3065.8 1890.7V1901.9M3065.8 1907.3V1907.5"/></g></svg>
<span class="t" style="left:3107.3px;top:1880.8px;font-size:36px;line-height:36px;color:#4a6a1a;letter-spacing:2.49px;font-weight:400;-webkit-text-stroke:.4px #4a6a1a;">Active</span>
<div class="b" style="left:3504.5px;top:1862.2px;width:243.4px;height:73.5px;border-radius:37px;background:#dbeafe"></div>
<div class="b" style="left:3537.0px;top:1877.5px;width:42.6px;height:42.8px;border-radius:5px;background:#1e40af"></div>
<span class="t" style="left:3593.4px;top:1880.8px;font-size:36px;line-height:36px;color:#3346b8;letter-spacing:2.09px;font-weight:400;-webkit-text-stroke:.4px #3346b8;">Energy</span>
</div>
<div role="row">
<div class="b" style="left:322.5px;top:2057.7px;width:3600.0px;height:2.8px;background:#ececf1"></div>
<div class="b" style="left:425.0px;top:1976.5px;width:58.5px;height:58.5px;border-radius:11px;border:3.8px solid #ebecef;background:#fff"></div>
<span class="t" style="left:529.0px;top:1987.5px;font-size:39px;line-height:39px;color:#2c2c37;letter-spacing:2.00px;font-weight:400;-webkit-text-stroke:.45px #2c2c37;">Upsilon Consulting</span>
<span class="t" style="left:1520.0px;top:1987.5px;font-size:39px;line-height:39px;color:#34343e;letter-spacing:2.46px;font-weight:400;-webkit-text-stroke:.4px #34343e;">https://www.gucci.com</span>
<span class="t" style="left:2331.0px;top:1987.5px;font-size:39px;line-height:39px;color:#4fa3e4;letter-spacing:2.41px;font-weight:400;-webkit-text-stroke:.4px #4fa3e4;">+90 (564) 796-84-53</span>
<div class="b" style="left:3016.7px;top:1968.7px;width:230.0px;height:73.5px;border-radius:37px;background:#ecfccb"></div>
<svg class="b" style="left:3040.0px;top:1975.7px;" width="60.0" height="60.0" viewBox="3040 1975.7 60 60" fill="none"><g stroke="#55702a" stroke-width="3" stroke-linecap="round" stroke-linejoin="round"><path d="M3080.1 1993.8A18.4 18.4 0 1 0 3079.0 2018.2"/><path d="M3078.3 2008.0L3084.2 2012.4L3093.3 2000.0"/><path d="M3065.8 1997.2V2008.4M3065.8 2013.8V2014.0"/></g></svg>
<span class="t" style="left:3107.3px;top:1987.4px;font-size:36px;line-height:36px;color:#4a6a1a;letter-spacing:2.49px;font-weight:400;-webkit-text-stroke:.4px #4a6a1a;">Active</span>
<div class="b" style="left:3504.5px;top:1968.7px;width:379.9px;height:73.5px;border-radius:37px;background:#d1fae5"></div>
<div class="b" style="left:3537.0px;top:1984.0px;width:42.6px;height:42.8px;border-radius:5px;background:#065f46"></div>
<span class="t" style="left:3593.4px;top:1987.4px;font-size:36px;line-height:36px;color:#0a6a52;letter-spacing:2.74px;font-weight:400;-webkit-text-stroke:.4px #0a6a52;">Manufacturing</span>
</div>
<div role="row">
<div class="b" style="left:322.5px;top:2164.2px;width:3600.0px;height:2.8px;background:#ececf1"></div>
<div class="b" style="left:425.0px;top:2083.1px;width:58.5px;height:58.5px;border-radius:11px;border:3.8px solid #ebecef;background:#fff"></div>
<span class="t" style="left:529.0px;top:2094.1px;font-size:39px;line-height:39px;color:#2c2c37;letter-spacing:2.21px;font-weight:400;-webkit-text-stroke:.45px #2c2c37;">Lambda Industries</span>
<span class="t" style="left:1520.0px;top:2094.1px;font-size:39px;line-height:39px;color:#34343e;letter-spacing:2.49px;font-weight:400;-webkit-text-stroke:.4px #34343e;">https://www.mazda.com</span>
<span class="t" style="left:2331.0px;top:2094.1px;font-size:39px;line-height:39px;color:#4fa3e4;letter-spacing:1.99px;font-weight:400;-webkit-text-stroke:.4px #4fa3e4;">+90 (569) 874-96-53</span>
<div class="b" style="left:3016.7px;top:2075.3px;width:230.0px;height:73.5px;border-radius:37px;background:#ecfccb"></div>
<svg class="b" style="left:3040.0px;top:2082.3px;" width="60.0" height="60.0" viewBox="3040 2082.3 60 60" fill="none"><g stroke="#55702a" stroke-width="3" stroke-linecap="round" stroke-linejoin="round"><path d="M3080.1 2100.4A18.4 18.4 0 1 0 3079.0 2124.8"/><path d="M3078.3 2114.6L3084.2 2119.0L3093.3 2106.6"/><path d="M3065.8 2103.8V2115.0M3065.8 2120.4V2120.6"/></g></svg>
<span class="t" style="left:3107.3px;top:2094.0px;font-size:36px;line-height:36px;color:#4a6a1a;letter-spacing:2.49px;font-weight:400;-webkit-text-stroke:.4px #4a6a1a;">Active</span>
<div class="b" style="left:3504.5px;top:2075.3px;width:321.5px;height:73.5px;border-radius:37px;background:#f3e8ff"></div>
<div class="b" style="left:3537.0px;top:2090.6px;width:42.6px;height:42.8px;border-radius:5px;background:#6b21a8"></div>
<span class="t" style="left:3593.4px;top:2094.0px;font-size:36px;line-height:36px;color:#6d28a8;letter-spacing:2.50px;font-weight:400;-webkit-text-stroke:.4px #6d28a8;">Automotive</span>
</div>
<div role="row">
<div class="b" style="left:322.5px;top:2270.7px;width:3600.0px;height:2.8px;background:#ececf1"></div>
<div class="b" style="left:425.0px;top:2189.7px;width:58.5px;height:58.5px;border-radius:11px;border:3.8px solid #ebecef;background:#fff"></div>
<span class="t" style="left:529.0px;top:2200.7px;font-size:39px;line-height:39px;color:#2c2c37;letter-spacing:1.24px;font-weight:400;-webkit-text-stroke:.45px #2c2c37;">Rho Resources</span>
<span class="t" style="left:1520.0px;top:2200.7px;font-size:39px;line-height:39px;color:#34343e;letter-spacing:2.42px;font-weight:400;-webkit-text-stroke:.4px #34343e;">https://www.n26.com</span>
<span class="t" style="left:2331.0px;top:2200.7px;font-size:39px;line-height:39px;color:#4fa3e4;letter-spacing:2.13px;font-weight:400;-webkit-text-stroke:.4px #4fa3e4;">+90 (564) 646-98-76</span>
<div class="b" style="left:3016.7px;top:2181.9px;width:230.0px;height:73.5px;border-radius:37px;background:#ecfccb"></div>
<svg class="b" style="left:3040.0px;top:2188.9px;" width="60.0" height="60.0" viewBox="3040 2188.9 60 60" fill="none"><g stroke="#55702a" stroke-width="3" stroke-linecap="round" stroke-linejoin="round"><path d="M3080.1 2207.0A18.4 18.4 0 1 0 3079.0 2231.4"/><path d="M3078.3 2221.2L3084.2 2225.6L3093.3 2213.2"/><path d="M3065.8 2210.4V2221.6M3065.8 2227.0V2227.2"/></g></svg>
<span class="t" style="left:3107.3px;top:2200.6px;font-size:36px;line-height:36px;color:#4a6a1a;letter-spacing:2.49px;font-weight:400;-webkit-text-stroke:.4px #4a6a1a;">Active</span>
<div class="b" style="left:3504.5px;top:2181.9px;width:261.6px;height:73.5px;border-radius:37px;background:#cffafe"></div>
<div class="b" style="left:3537.0px;top:2197.2px;width:42.6px;height:42.8px;border-radius:5px;background:#155e75"></div>
<span class="t" style="left:3593.4px;top:2200.6px;font-size:36px;line-height:36px;color:#1f637a;letter-spacing:2.44px;font-weight:400;-webkit-text-stroke:.4px #1f637a;">Finance</span>
</div>
<div role="row">
<div class="b" style="left:322.5px;top:2377.3px;width:3600.0px;height:2.8px;background:#ececf1"></div>
<div class="b" style="left:425.0px;top:2296.2px;width:58.5px;height:58.5px;border-radius:11px;border:3.8px solid #ebecef;background:#fff"></div>
<span class="t" style="left:529.0px;top:2307.3px;font-size:39px;line-height:39px;color:#2c2c37;letter-spacing:2.00px;font-weight:400;-webkit-text-stroke:.45px #2c2c37;">Omicron Holdings</span>
<span class="t" style="left:1520.0px;top:2307.3px;font-size:39px;line-height:39px;color:#34343e;letter-spacing:2.38px;font-weight:400;-webkit-text-stroke:.4px #34343e;">https://www.captain.com</span>
<span class="t" style="left:2331.0px;top:2307.3px;font-size:39px;line-height:39px;color:#4fa3e4;letter-spacing:2.41px;font-weight:400;-webkit-text-stroke:.4px #4fa3e4;">+90 (564) 798-64-53</span>
<div class="b" style="left:3016.7px;top:2288.4px;width:230.0px;height:73.5px;border-radius:37px;background:#ecfccb"></div>
<svg class="b" style="left:3040.0px;top:2295.4px;" width="60.0" height="60.0" viewBox="3040 2295.4 60 60" fill="none"><g stroke="#55702a" stroke-width="3" stroke-linecap="round" stroke-linejoin="round"><path d="M3080.1 2313.5A18.4 18.4 0 1 0 3079.0 2337.9"/><path d="M3078.3 2327.7L3084.2 2332.1L3093.3 2319.7"/><path d="M3065.8 2316.9V2328.1M3065.8 2333.5V2333.7"/></g></svg>
<span class="t" style="left:3107.3px;top:2307.2px;font-size:36px;line-height:36px;color:#4a6a1a;letter-spacing:2.49px;font-weight:400;-webkit-text-stroke:.4px #4a6a1a;">Active</span>
<div class="b" style="left:3504.5px;top:2288.4px;width:321.5px;height:73.5px;border-radius:37px;background:#f3e8ff"></div>
<div class="b" style="left:3537.0px;top:2303.7px;width:42.6px;height:42.8px;border-radius:5px;background:#6b21a8"></div>
<span class="t" style="left:3593.4px;top:2307.2px;font-size:36px;line-height:36px;color:#6d28a8;letter-spacing:2.50px;font-weight:400;-webkit-text-stroke:.4px #6d28a8;">Automotive</span>
</div>
<div role="row">
<div class="b" style="left:322.5px;top:2483.8px;width:3600.0px;height:2.8px;background:#ececf1"></div>
<div class="b" style="left:425.0px;top:2402.8px;width:58.5px;height:58.5px;border-radius:11px;border:3.8px solid #ebecef;background:#fff"></div>
<span class="t" style="left:529.0px;top:2413.9px;font-size:39px;line-height:39px;color:#2c2c37;letter-spacing:2.60px;font-weight:400;-webkit-text-stroke:.45px #2c2c37;">Nu Networks</span>
<span class="t" style="left:1520.0px;top:2413.9px;font-size:39px;line-height:39px;color:#34343e;letter-spacing:2.26px;font-weight:400;-webkit-text-stroke:.4px #34343e;">https://www.firstsolar.com</span>
<span class="t" style="left:2331.0px;top:2413.9px;font-size:39px;line-height:39px;color:#4fa3e4;letter-spacing:1.95px;font-weight:400;-webkit-text-stroke:.4px #4fa3e4;">+90 (546) 651-32-89</span>
<div class="b" style="left:3016.7px;top:2395.0px;width:230.0px;height:73.5px;border-radius:37px;background:#ecfccb"></div>
<svg class="b" style="left:3040.0px;top:2402.0px;" width="60.0" height="60.0" viewBox="3040 2402.0 60 60" fill="none"><g stroke="#55702a" stroke-width="3" stroke-linecap="round" stroke-linejoin="round"><path d="M3080.1 2420.1A18.4 18.4 0 1 0 3079.0 2444.5"/><path d="M3078.3 2434.3L3084.2 2438.7L3093.3 2426.3"/><path d="M3065.8 2423.5V2434.7M3065.8 2440.1V2440.3"/></g></svg>
<span class="t" style="left:3107.3px;top:2413.9px;font-size:36px;line-height:36px;color:#4a6a1a;letter-spacing:2.49px;font-weight:400;-webkit-text-stroke:.4px #4a6a1a;">Active</span>
<div class="b" style="left:3504.5px;top:2395.0px;width:243.4px;height:73.5px;border-radius:37px;background:#dbeafe"></div>
<div class="b" style="left:3537.0px;top:2410.3px;width:42.6px;height:42.8px;border-radius:5px;background:#1e40af"></div>
<span class="t" style="left:3593.4px;top:2413.9px;font-size:36px;line-height:36px;color:#3346b8;letter-spacing:2.09px;font-weight:400;-webkit-text-stroke:.4px #3346b8;">Energy</span>
</div>
<div role="row">
<div class="b" style="left:322.5px;top:2590.3px;width:3600.0px;height:2.8px;background:#ececf1"></div>
<div class="b" style="left:425.0px;top:2509.4px;width:58.5px;height:58.5px;border-radius:11px;border:3.8px solid #ebecef;background:#fff"></div>
<span class="t" style="left:529.0px;top:2520.5px;font-size:39px;line-height:39px;color:#2c2c37;letter-spacing:1.94px;font-weight:400;-webkit-text-stroke:.45px #2c2c37;">Iota Systems</span>
<span class="t" style="left:1520.0px;top:2520.5px;font-size:39px;line-height:39px;color:#34343e;letter-spacing:2.25px;font-weight:400;-webkit-text-stroke:.4px #34343e;">https://www.nike.com</span>
<span class="t" style="left:2331.0px;top:2520.5px;font-size:39px;line-height:39px;color:#4fa3e4;letter-spacing:2.13px;font-weight:400;-webkit-text-stroke:.4px #4fa3e4;">+90 (564) 798-45-31</span>
<div class="b" style="left:3016.7px;top:2501.6px;width:230.0px;height:73.5px;border-radius:37px;background:#ecfccb"></div>
<svg class="b" style="left:3040.0px;top:2508.6px;" width="60.0" height="60.0" viewBox="3040 2508.6 60 60" fill="none"><g stroke="#55702a" stroke-width="3" stroke-linecap="round" stroke-linejoin="round"><path d="M3080.1 2526.7A18.4 18.4 0 1 0 3079.0 2551.1"/><path d="M3078.3 2540.9L3084.2 2545.3L3093.3 2532.9"/><path d="M3065.8 2530.1V2541.3M3065.8 2546.7V2546.9"/></g></svg>
<span class="t" style="left:3107.3px;top:2520.5px;font-size:36px;line-height:36px;color:#4a6a1a;letter-spacing:2.49px;font-weight:400;-webkit-text-stroke:.4px #4a6a1a;">Active</span>
<div class="b" style="left:3504.5px;top:2501.6px;width:379.9px;height:73.5px;border-radius:37px;background:#d1fae5"></div>
<div class="b" style="left:3537.0px;top:2516.9px;width:42.6px;height:42.8px;border-radius:5px;background:#065f46"></div>
<span class="t" style="left:3593.4px;top:2520.5px;font-size:36px;line-height:36px;color:#0a6a52;letter-spacing:2.74px;font-weight:400;-webkit-text-stroke:.4px #0a6a52;">Manufacturing</span>
</div>
<div role="row">
<div class="b" style="left:322.5px;top:2696.9px;width:3600.0px;height:2.8px;background:#ececf1"></div>
<div class="b" style="left:425.0px;top:2615.9px;width:58.5px;height:58.5px;border-radius:11px;border:3.8px solid #ebecef;background:#fff"></div>
<span class="t" style="left:529.0px;top:2627.1px;font-size:39px;line-height:39px;color:#2c2c37;letter-spacing:1.99px;font-weight:400;-webkit-text-stroke:.45px #2c2c37;">Eta Technologies</span>
<span class="t" style="left:1520.0px;top:2627.1px;font-size:39px;line-height:39px;color:#34343e;letter-spacing:2.42px;font-weight:400;-webkit-text-stroke:.4px #34343e;">https://www.arlo.com</span>
<span class="t" style="left:2331.0px;top:2627.1px;font-size:39px;line-height:39px;color:#4fa3e4;letter-spacing:2.06px;font-weight:400;-webkit-text-stroke:.4px #4fa3e4;">+90 (561) 646-46-48</span>
<div class="b" style="left:3016.7px;top:2608.1px;width:230.0px;height:73.5px;border-radius:37px;background:#ecfccb"></div>
<svg class="b" style="left:3040.0px;top:2615.1px;" width="60.0" height="60.0" viewBox="3040 2615.1 60 60" fill="none"><g stroke="#55702a" stroke-width="3" stroke-linecap="round" stroke-linejoin="round"><path d="M3080.1 2633.2A18.4 18.4 0 1 0 3079.0 2657.6"/><path d="M3078.3 2647.4L3084.2 2651.8L3093.3 2639.4"/><path d="M3065.8 2636.6V2647.8M3065.8 2653.2V2653.4"/></g></svg>
<span class="t" style="left:3107.3px;top:2627.1px;font-size:36px;line-height:36px;color:#4a6a1a;letter-spacing:2.49px;font-weight:400;-webkit-text-stroke:.4px #4a6a1a;">Active</span>
<div class="b" style="left:3504.5px;top:2608.1px;width:325.9px;height:73.5px;border-radius:37px;background:#fef3c7"></div>
<div class="b" style="left:3537.0px;top:2623.4px;width:42.6px;height:42.8px;border-radius:5px;background:#92400e"></div>
<span class="t" style="left:3593.4px;top:2627.1px;font-size:36px;line-height:36px;color:#96480f;letter-spacing:2.77px;font-weight:400;-webkit-text-stroke:.4px #96480f;">Technology</span>
</div>
<div role="row">
<div class="b" style="left:322.5px;top:2803.4px;width:3600.0px;height:2.8px;background:#ececf1"></div>
<div class="b" style="left:425.0px;top:2722.5px;width:58.5px;height:58.5px;border-radius:11px;border:3.8px solid #ebecef;background:#fff"></div>
<span class="t" style="left:529.0px;top:2733.7px;font-size:39px;line-height:39px;color:#2c2c37;letter-spacing:1.76px;font-weight:400;-webkit-text-stroke:.45px #2c2c37;">Revolut</span>
<span class="t" style="left:1520.0px;top:2733.7px;font-size:39px;line-height:39px;color:#34343e;letter-spacing:2.20px;font-weight:400;-webkit-text-stroke:.4px #34343e;">https://www.revolut.com</span>
<span class="t" style="left:2331.0px;top:2733.7px;font-size:39px;line-height:39px;color:#4fa3e4;letter-spacing:2.23px;font-weight:400;-webkit-text-stroke:.4px #4fa3e4;">+90 (548) 486-53-13</span>
<div class="b" style="left:3016.7px;top:2714.7px;width:261.0px;height:73.5px;border-radius:37px;background:#ffe4e6"></div>
<svg class="b" style="left:3040.0px;top:2721.7px;" width="60.0" height="60.0" viewBox="3040 2721.7 60 60" fill="none"><g stroke="#be1d4a" stroke-width="3" stroke-linecap="round"><circle cx="3070.5" cy="2751.2" r="22.6"/><path d="M3065.5 2746.2L3075.5 2756.2M3075.5 2746.2L3065.5 2756.2"/></g></svg>
<span class="t" style="left:3107.0px;top:2733.7px;font-size:36px;line-height:36px;color:#9f1239;letter-spacing:2.28px;font-weight:400;-webkit-text-stroke:.4px #9f1239;">Inactive</span>
<div class="b" style="left:3504.5px;top:2714.7px;width:261.6px;height:73.5px;border-radius:37px;background:#cffafe"></div>
<div class="b" style="left:3537.0px;top:2730.0px;width:42.6px;height:42.8px;border-radius:5px;background:#155e75"></div>
<span class="t" style="left:3593.4px;top:2733.7px;font-size:36px;line-height:36px;color:#1f637a;letter-spacing:2.44px;font-weight:400;-webkit-text-stroke:.4px #1f637a;">Finance</span>
</div>
<div role="row">
<div class="b" style="left:322.5px;top:2909.9px;width:3600.0px;height:2.8px;background:#ececf1"></div>
<div class="b" style="left:425.0px;top:2829.1px;width:58.5px;height:58.5px;border-radius:11px;border:3.8px solid #ebecef;background:#fff"></div>
<span class="t" style="left:529.0px;top:2840.4px;font-size:39px;line-height:39px;color:#2c2c37;letter-spacing:1.92px;font-weight:400;-webkit-text-stroke:.45px #2c2c37;">Omega Solutions</span>
<span class="t" style="left:1520.0px;top:2840.4px;font-size:39px;line-height:39px;color:#34343e;letter-spacing:2.39px;font-weight:400;-webkit-text-stroke:.4px #34343e;">https://www.xpeng.com</span>
<span class="t" style="left:2331.0px;top:2840.4px;font-size:39px;line-height:39px;color:#4fa3e4;letter-spacing:2.23px;font-weight:400;-webkit-text-stroke:.4px #4fa3e4;">+90 (546) 879-65-37</span>
<div class="b" style="left:3016.7px;top:2821.3px;width:230.0px;height:73.5px;border-radius:37px;background:#ecfccb"></div>
<svg class="b" style="left:3040.0px;top:2828.3px;" width="60.0" height="60.0" viewBox="3040 2828.3 60 60" fill="none"><g stroke="#55702a" stroke-width="3" stroke-linecap="round" stroke-linejoin="round"><path d="M3080.1 2846.4A18.4 18.4 0 1 0 3079.0 2870.8"/><path d="M3078.3 2860.6L3084.2 2865.0L3093.3 2852.6"/><path d="M3065.8 2849.8V2861.0M3065.8 2866.4V2866.6"/></g></svg>
<span class="t" style="left:3107.3px;top:2840.3px;font-size:36px;line-height:36px;color:#4a6a1a;letter-spacing:2.49px;font-weight:400;-webkit-text-stroke:.4px #4a6a1a;">Active</span>
<div class="b" style="left:3504.5px;top:2821.3px;width:321.5px;height:73.5px;border-radius:37px;background:#f3e8ff"></div>
<div class="b" style="left:3537.0px;top:2836.6px;width:42.6px;height:42.8px;border-radius:5px;background:#6b21a8"></div>
<span class="t" style="left:3593.4px;top:2840.3px;font-size:36px;line-height:36px;color:#6d28a8;letter-spacing:2.50px;font-weight:400;-webkit-text-stroke:.4px #6d28a8;">Automotive</span>
</div>
</main>
</body></html>
